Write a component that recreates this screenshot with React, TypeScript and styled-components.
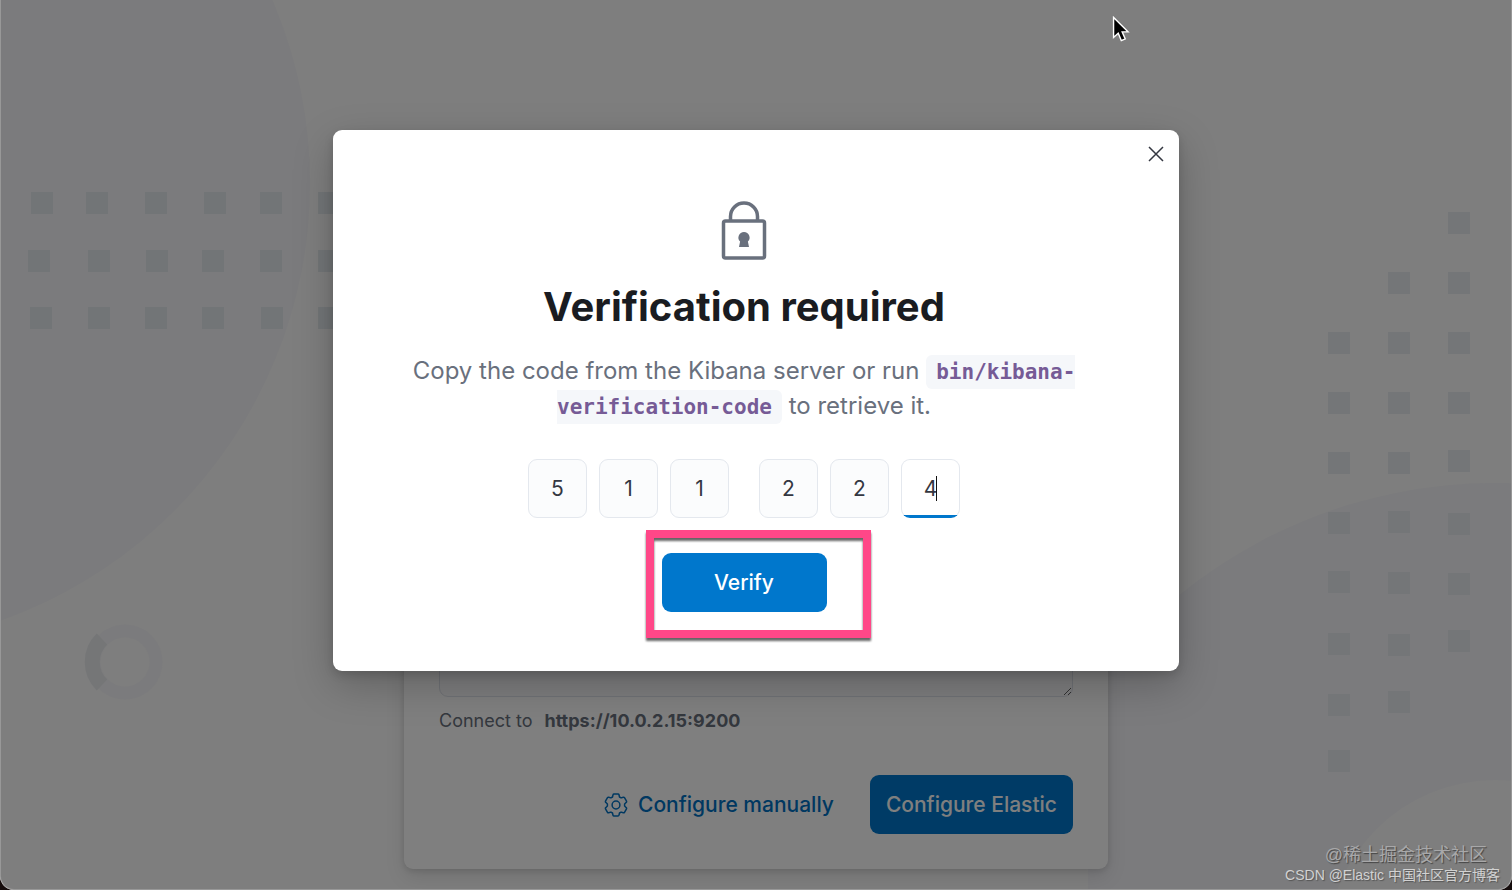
import React, { useState } from "react";
import styled, { createGlobalStyle } from "styled-components";

const GlobalStyle = createGlobalStyle`
  *, *::before, *::after { box-sizing: border-box; }
  body {
    margin: 0;
    background: #150c0c;
    font-family: Inter, "Liberation Sans", "Noto Sans CJK SC", sans-serif;
    color: #343741;
  }
  button, input, textarea { font: inherit; }
`;

const Page = styled.div`
  position: relative;
  display: flex;
  flex-direction: column;
  justify-content: flex-end;
  align-items: center;
  min-height: 100vh;
  padding: 200px 24px 21px;
  overflow: hidden;
  border-radius: 0 0 14px 14px;
  background: #fcfcfc;
`;

const Decor = styled.svg<{ $side: "left" | "right" }>`
  position: absolute;
  top: 0;
  ${(p) => p.$side}: 0;
`;

const Card = styled.main`
  position: relative;
  width: 100%;
  max-width: 704px;
  padding: 35px;
  border-radius: 9px;
  background: #fff;
  box-shadow: 0 2px 6px rgba(0, 0, 0, 0.12), 0 8px 20px rgba(0, 0, 0, 0.1);
`;

const TokenField = styled.textarea`
  display: block;
  width: 100%;
  height: 220px;
  border: 1px solid #dfe2ea;
  border-radius: 9px;
  background: #fbfbfd;
  resize: vertical;
`;

const HelpText = styled.p`
  display: flex;
  gap: 12px;
  margin: 10px 0 0;
  font-size: 18px;
  line-height: 27px;
  color: #69707d;
`;

const CardActions = styled.div`
  display: flex;
  justify-content: flex-end;
  gap: 20px;
  margin-top: 41px;
`;

const PrimaryButton = styled.button<{ $width?: number }>`
  min-width: ${(p) => p.$width ?? 0}px;
  height: 59px;
  padding: 0 16px;
  border: 0;
  border-radius: 9px;
  background: #0077cc;
  color: #fff;
  font-size: 21px;
  font-weight: 500;
`;

const LinkButton = styled.button`
  display: flex;
  align-items: center;
  gap: 10px;
  height: 59px;
  padding: 0 16px;
  border: 0;
  background: none;
  color: #0071c2;
  font-size: 21px;
  font-weight: 500;
`;

const Mask = styled.div`
  position: absolute;
  inset: 0;
  display: flex;
  justify-content: center;
  align-items: flex-start;
  padding: 130px 24px 24px;
  border: 1px solid #989898;
  border-top: 0;
  border-radius: 0 0 14px 14px;
  background: rgba(0, 0, 0, 0.5);
`;

const Dialog = styled.section`
  position: relative;
  width: 100%;
  max-width: 846px;
  padding: 71px 100px 59px 76px;
  border-radius: 9px;
  background: #fff;
  text-align: center;
  box-shadow: 0 4px 10px rgba(0, 0, 0, 0.14), 0 14px 40px rgba(0, 0, 0, 0.22);
`;

const CloseButton = styled.button`
  position: absolute;
  top: 6px;
  right: 6px;
  display: grid;
  place-items: center;
  width: 35px;
  height: 35px;
  padding: 0;
  border: 0;
  background: none;
  color: #343741;
`;

const LockIcon = styled.svg`
  display: block;
  margin: 0 auto;
`;

const Title = styled.h1`
  margin: 20px 0 0;
  font-size: 40px;
  line-height: 52px;
  font-weight: 700;
  color: #1a1c21;
`;

const Lead = styled.p`
  margin: 20px 0 0;
  font-size: 24px;
  line-height: 35px;
  color: #69707d;
`;

const Code = styled.code`
  padding: 5px 10px;
  border-radius: 6px;
  background: #f5f7fa;
  color: #765b96;
  font-family: "DejaVu Sans Mono", "Liberation Mono", monospace;
  font-size: 21px;
  line-height: 24px;
  font-weight: 700;
`;

const CodeForm = styled.form`
  display: flex;
  flex-direction: column;
  align-items: center;
  gap: 35px;
  margin-top: 36px;
`;

const Digits = styled.div`
  display: flex;
  gap: 30px;
`;

const DigitGroup = styled.div`
  display: flex;
  gap: 12px;
`;

const Digit = styled.input<{ $active: boolean }>`
  width: 59px;
  height: 59px;
  padding: 0;
  border: 1px solid #e4e8ee;
  border-radius: 9px;
  background: ${(p) =>
    p.$active
      ? "linear-gradient(to top, #0077cc 3px, #fff 3px) border-box"
      : "#fbfcfd"};
  border-bottom-color: ${(p) => (p.$active ? "transparent" : "#e4e8ee")};
  color: #343741;
  font-size: 21px;
  text-align: center;
  outline: none;
`;

const DigitCell = styled.span`
  position: relative;
  display: block;
`;

const Caret = styled.span`
  position: absolute;
  top: 17px;
  left: 35px;
  width: 1px;
  height: 25px;
  background: #111;
`;

const VerifyArea = styled.div`
  position: relative;
`;

const Highlight = styled.div`
  position: absolute;
  top: -23px;
  left: -16px;
  right: -44px;
  bottom: -26px;
  border: 8px solid #ff4788;
  filter: drop-shadow(0 3px 1px rgba(0, 0, 0, 0.6));
  pointer-events: none;
`;

const Pointer = styled.svg`
  position: absolute;
  top: 16px;
  left: 1111px;
`;

const Watermark = styled.footer`
  position: absolute;
  right: 11px;
  bottom: 4px;
  display: flex;
  flex-direction: column;
  align-items: flex-end;
  font-family: "Liberation Sans", "Noto Sans CJK SC", sans-serif;
`;

const Community = styled.span`
  margin-right: 13px;
  font-size: 18px;
  line-height: 20px;
  color: #a8a8a9;
  text-shadow: 1px 1px 1px #444;
`;

const Author = styled.span`
  font-size: 14px;
  line-height: 20px;
  color: #d2d2d2;
  text-shadow: 1px 1px 1px #555;
`;

const leftSquares = [
  [31, 192], [86, 192], [145, 192], [204, 192], [260, 192], [318, 192],
  [28, 250], [88, 250], [146, 250], [202, 250], [260, 250], [318, 250],
  [30, 307], [88, 307], [145, 307], [202, 307], [261, 307], [318, 307],
];

const rightSquares = [
  [360, 212],
  [300, 272], [360, 272],
  [240, 332], [300, 332], [360, 332],
  [240, 392], [300, 392], [360, 392],
  [240, 452], [300, 452], [360, 450],
  [240, 512], [300, 511], [360, 513],
  [240, 571], [300, 572], [360, 573],
  [240, 633], [300, 634], [360, 630],
  [240, 694], [300, 691],
  [240, 750],
];

const Squares = ({ cells, fill }: { cells: number[][]; fill: string }) => (
  <g fill={fill}>
    {cells.map(([x, y]) => (
      <rect key={`${x}-${y}`} x={x} y={y} width="22" height="22" />
    ))}
  </g>
);

const GearIcon = () => (
  <svg width="24" height="24" viewBox="0 0 24 24" fill="none" stroke="currentColor" strokeWidth="1.5" strokeLinejoin="round" aria-hidden="true">
    <path d="M10 1h4q.8 0 1 .8l.5 2.200 1.600.9 2.200-.7q.8-.2 1.200.5l2 3.400q.4.700-.2 1.200L20.600 11v2l1.700 1.700q.6.500.2 1.200l-2 3.400q-.4.700-1.200.5l-2.200-.7-1.600.9-.5 2.200q-.2.800-1 .8h-4q-.8 0-1-.8L8.500 20l-1.600-.9-2.200.7q-.8.200-1.200-.5l-2-3.400q-.4-.7.200-1.200L3.400 13v-2L1.700 9.300q-.6-.5-.2-1.200l2-3.400q.4-.7 1.200-.5l2.200.7L8.500 4 9 1.800q.2-.8 1-.8z" />
    <circle cx="12" cy="12" r="3.900" />
  </svg>
);

export default function App() {
  const [digits, setDigits] = useState(["5", "1", "1", "2", "2", "4"]);
  const active = 5;

  const change = (index: number, value: string) =>
    setDigits(digits.map((d, i) => (i === index ? value : d)));

  return (
    <>
      <GlobalStyle />
      <Page>
        <Decor $side="left" width="400" height="890" viewBox="0 0 400 890" aria-hidden="true">
          <circle cx="-154" cy="183" r="464" fill="#f6f6fa" />
          <Squares cells={leftSquares} fill="#e5eaee" />
          <circle cx="125" cy="662" r="31" fill="none" stroke="#f7f7fa" strokeWidth="13" />
          <path d="M102 639a32 32 0 0 0 0 46" fill="none" stroke="#eaecef" strokeWidth="15" />
        </Decor>
        <Decor $side="right" width="424" height="890" viewBox="0 0 424 890" aria-hidden="true">
          <path
            fill="#f6f6fa"
            fillRule="evenodd"
            d="M-94 984a501 501 0 0 1 1002 0a501 501 0 0 1 -1002 0zM239 948a168 168 0 0 0 336 0a168 168 0 0 0 -336 0z"
          />
          <Squares cells={rightSquares} fill="#e9ecf0" />
        </Decor>
        <Card>
          <TokenField aria-label="Enrollment token" />
          <HelpText>
            <span>Connect to</span>
            <strong>https://10.0.2.15:9200</strong>
          </HelpText>
          <CardActions>
            <LinkButton type="button">
              <GearIcon />
              Configure manually
            </LinkButton>
            <PrimaryButton type="button">Configure Elastic</PrimaryButton>
          </CardActions>
        </Card>
        <Mask>
          <Dialog role="dialog" aria-modal="true" aria-labelledby="verify-title">
            <CloseButton type="button" aria-label="Close">
              <svg width="16" height="16" viewBox="0 0 16 16" fill="none" stroke="currentColor" strokeWidth="1.500">
                <path d="M1 1l14 14M15 1L1 15" />
              </svg>
            </CloseButton>
            <LockIcon width="46" height="60" viewBox="0 0 46 60" fill="none" stroke="#69707d" strokeWidth="3.500" aria-hidden="true">
              <rect x="2.500" y="20" width="41" height="37" rx="2" />
              <path d="M9.500 20v-4.500a13.500 13.500 0 0 1 27 0V20" />
              <path d="M23 31a5.600 5.600 0 0 0-3.900 9.600L18 46h10l-1.100-5.400A5.600 5.600 0 0 0 23 31z" fill="#69707d" stroke="none" />
            </LockIcon>
            <Title id="verify-title">Verification required</Title>
            <Lead>
              Copy the code from the Kibana server or run <Code>bin/kibana-verification-code</Code> to retrieve it.
            </Lead>
            <CodeForm onSubmit={(e) => e.preventDefault()}>
              <Digits>
                {[0, 3].map((start) => (
                  <DigitGroup key={start}>
                    {digits.slice(start, start + 3).map((value, offset) => {
                      const index = start + offset;
                      return (
                        <DigitCell key={index}>
                          <Digit
                            $active={index === active}
                            aria-label={`Digit ${index + 1}`}
                            maxLength={1}
                            value={value}
                            onChange={(e) => change(index, e.target.value)}
                          />
                          {index === active && <Caret />}
                        </DigitCell>
                      );
                    })}
                  </DigitGroup>
                ))}
              </Digits>
              <VerifyArea>
                <PrimaryButton type="submit" $width={165}>Verify</PrimaryButton>
                <Highlight />
              </VerifyArea>
            </CodeForm>
          </Dialog>
          <Watermark>
            <Community>@稀土掘金技术社区</Community>
            <Author>CSDN @Elastic 中国社区官方博客</Author>
          </Watermark>
          <Pointer width="19" height="28" viewBox="0 0 20 30" aria-hidden="true">
            <path d="M1.500 1.500v21.500l5-4.500 3.300 7.800 4.200-1.800-3.300-7.500h6.300z" fill="#000" stroke="#fff" strokeWidth="1.500" />
          </Pointer>
        </Mask>
      </Page>
    </>
  );
}
